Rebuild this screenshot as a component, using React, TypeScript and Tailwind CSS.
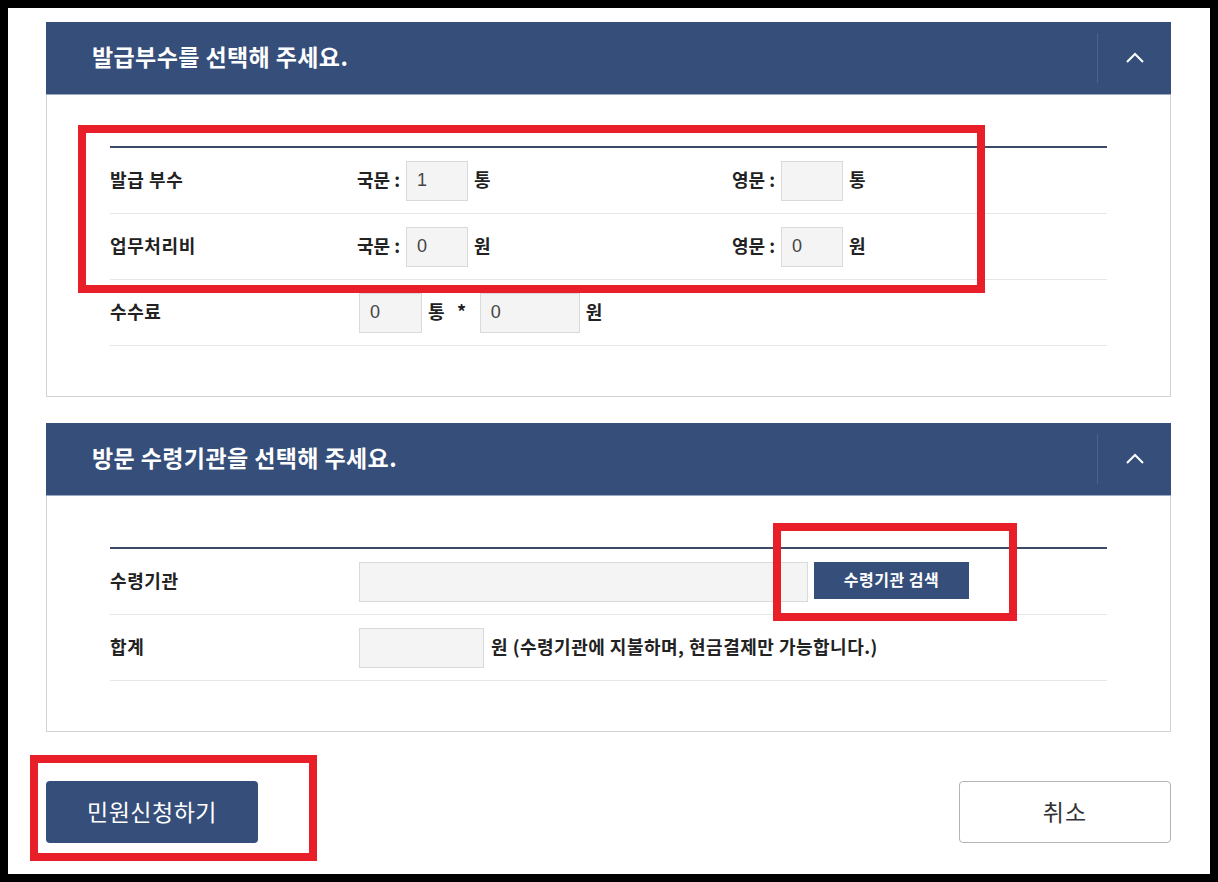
import { ReactNode } from 'react';

const font = { fontFamily: '"Noto Sans CJK KR", "Noto Sans", sans-serif' };

// 섹션 헤더 (접기 버튼 포함)
function PanelHeader({ title }: { title: string }) {
  return (
    <div className="flex h-[73px] items-center bg-[#354e7a] border-b border-[#9aa8bf]">
      <p className="flex-1 pl-[46px] pb-[3px] text-[23px] font-bold tracking-[0.4px] text-white">{title}</p>
      <div className="flex h-[50px] w-[74px] items-center justify-center border-l border-[#4b6290]">
        <svg width="20" height="12" viewBox="0 0 20 12" fill="none">
          <polyline points="2,10 10,2 18,10" stroke="white" strokeWidth="2" />
        </svg>
      </div>
    </div>
  );
}

function Panel({ title, children }: { title: string; children: ReactNode }) {
  return (
    <div>
      <PanelHeader title={title} />
      <div className="border-x border-b border-[#d2d2d2] px-[63px] pt-[51px] pb-[50px]">
        <div className="border-t-2 border-[#3c4b65]">{children}</div>
      </div>
    </div>
  );
}

function Row({ label, children }: { label: string; children: ReactNode }) {
  return (
    <div className="flex h-[66px] items-center border-b border-[#e6e6e6]">
      <p className="w-[249px] pb-[3px] text-[18px] font-bold tracking-[0.6px] text-[#222]">{label}</p>
      <div className="flex flex-1 items-center">{children}</div>
    </div>
  );
}

function Box({ value, w }: { value?: string; w: string }) {
  return (
    <div
      className={`flex h-[40px] items-center border border-[#dadada] bg-[#f4f4f4] pl-[10px] text-[18px] text-[#444] font-['Liberation_Sans',sans-serif] ${w}`}
    >
      {value}
    </div>
  );
}

function Unit({ children }: { children: ReactNode }) {
  return <span className="text-[18px] font-bold tracking-[0.5px] text-[#222]">{children}</span>;
}

// 국문/영문 입력 묶음
function LangField({ lang, value, unit }: { lang: string; value?: string; unit: string }) {
  return (
    <div className="flex w-[375px] items-center">
      <span className="w-[49px] pb-[3px] text-[18px] font-bold text-[#222]">{lang} :</span>
      <Box value={value} w="w-[62px]" />
      <span className="ml-[6px] pb-[3px]"><Unit>{unit}</Unit></span>
    </div>
  );
}

// 안내 표시용 빨간 테두리
function Mark({ className }: { className: string }) {
  return <div className={`pointer-events-none absolute border-[8px] border-[#e81e28] ${className}`} />;
}

export default function App() {
  return (
    <div className="relative h-screen bg-black p-2" style={font}>
      <div className="flex h-full flex-col bg-white pl-[38px] pr-[39px] pt-[14px]">
        {/* 발급부수 */}
        <Panel title="발급부수를 선택해 주세요.">
          <Row label="발급 부수">
            <LangField lang="국문" value="1" unit="통" />
            <LangField lang="영문" unit="통" />
          </Row>
          <Row label="업무처리비">
            <LangField lang="국문" value="0" unit="원" />
            <LangField lang="영문" value="0" unit="원" />
          </Row>
          <Row label="수수료">
            <Box value="0" w="w-[63px]" />
            <span className="ml-[6px] pb-[3px]"><Unit>통</Unit></span>
            <span className="ml-[12px] mr-[13px] pb-[3px]"><Unit>*</Unit></span>
            <Box value="0" w="w-[100px]" />
            <span className="ml-[6px] pb-[3px]"><Unit>원</Unit></span>
          </Row>
        </Panel>

        <div className="h-[26px]" />

        {/* 수령기관 */}
        <Panel title="방문 수령기관을 선택해 주세요.">
          <Row label="수령기관">
            <Box w="w-[449px]" />
            <button className="ml-[6px] mt-[-3px] h-[37px] w-[155px] pb-[2px] bg-[#354e7a] text-[16px] font-bold tracking-[0.5px] text-white">
              수령기관 검색
            </button>
          </Row>
          <Row label="합계">
            <Box w="w-[125px]" />
            <span className="ml-[7px] pb-[3px]"><Unit>원 (수령기관에 지불하며, 현금결제만 가능합니다.)</Unit></span>
          </Row>
        </Panel>

        {/* 하단 버튼 */}
        <div className="mt-[49px] flex justify-between">
          <button className="h-[62px] w-[212px] rounded-[4px] bg-[#354e7a] pb-[2px] text-[23px] tracking-[0.5px] text-white">민원신청하기</button>
          <button className="h-[62px] w-[212px] rounded-[4px] border border-[#b4b4b4] bg-white pb-[2px] text-[23px] tracking-[1px] text-[#333]">취소</button>
        </div>
      </div>

      <Mark className="left-[78px] top-[125px] h-[168px] w-[907px]" />
      <Mark className="left-[773px] top-[523px] h-[98px] w-[244px]" />
      <Mark className="left-[30px] top-[755px] h-[106px] w-[287px]" />
    </div>
  );
}
